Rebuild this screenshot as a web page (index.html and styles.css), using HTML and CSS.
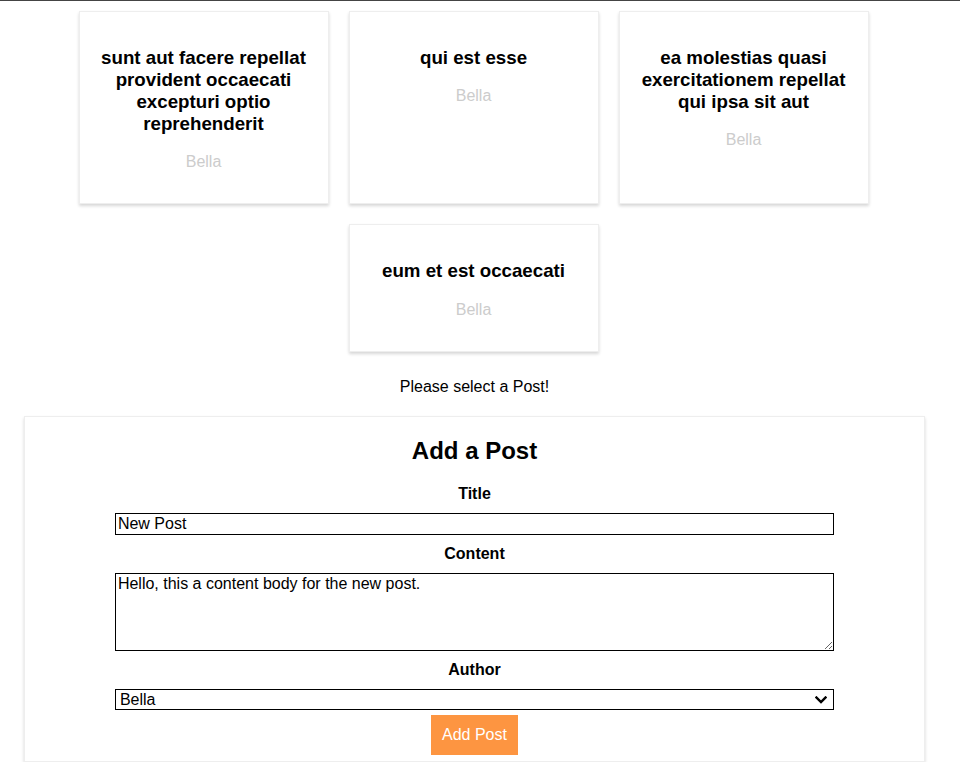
FILE: index.html
```html
<!DOCTYPE html>
<html lang="en">
<head>
<meta charset="utf-8">
<title>Posts</title>
<link rel="stylesheet" href="styles.css">
</head>
<body>
<div class="topbar"></div>
<main class="main">
  <section class="posts">
    <article class="card">
      <h3 class="card-title">sunt aut facere repellat provident occaecati excepturi optio reprehenderit</h3>
      <p class="card-author">Bella</p>
    </article>
    <article class="card">
      <h3 class="card-title">qui est esse</h3>
      <p class="card-author">Bella</p>
    </article>
    <article class="card">
      <h3 class="card-title">ea molestias quasi exercitationem repellat qui ipsa sit aut</h3>
      <p class="card-author">Bella</p>
    </article>
    <article class="card">
      <h3 class="card-title">eum et est occaecati</h3>
      <p class="card-author">Bella</p>
    </article>
  </section>
  <p class="hint">Please select a Post!</p>
  <section class="form-box">
    <h2 class="form-title">Add a Post</h2>
    <form class="form">
      <label class="label" for="title">Title</label>
      <input class="field" id="title" type="text" value="New Post">
      <label class="label" for="content">Content</label>
      <textarea class="field area" id="content">Hello, this a content body for the new post.</textarea>
      <label class="label" for="author">Author</label>
      <div class="select-wrap">
        <select class="field select" id="author">
          <option>Bella</option>
        </select>
        <svg class="chevron" width="12" height="8" viewBox="0 0 12 8" aria-hidden="true">
          <path d="M1.5 1.5 L6 6 L10.5 1.5" fill="none" stroke="#000" stroke-width="2.4" stroke-linecap="square"/>
        </svg>
      </div>
      <button class="btn" type="button">Add Post</button>
    </form>
  </section>
</main>
</body>
</html>
```

FILE: styles.css
```css
html, body {
  margin: 0;
  padding: 0;
  background: #fff;
  font-family: "Liberation Sans", Arial, sans-serif;
  font-size: 16px;
  color: #000;
}

.topbar {
  height: 1px;
  background: #444;
}

.main {
  width: 933px;
  margin: 0 0 0 8px;
}

.posts {
  display: flex;
  flex-wrap: wrap;
  justify-content: center;
  margin-right: 2px;
}

.card {
  width: 250px;
  box-sizing: border-box;
  margin: 10px;
  padding: 16px;
  border: 1px solid #eee;
  box-shadow: 0 2px 3px rgba(0, 0, 0, 0.16);
  text-align: center;
  background: #fff;
}

.card-title {
  font-size: 18.72px;
  font-weight: bold;
  margin: 18.72px 0;
}

.card-author {
  color: #ccc;
  margin: 16px 0;
}

.hint {
  text-align: center;
  margin: 16px 0;
}

.form-box {
  margin: 20px 16px 0;
  border: 1px solid #eee;
  box-shadow: 0 2px 3px rgba(0, 0, 0, 0.16);
  padding: 0 0 6px;
  text-align: center;
}

.form-title {
  font-size: 24px;
  font-weight: bold;
  margin: 19.92px 0;
}

.form {
  display: flex;
  flex-direction: column;
  align-items: center;
}

.label {
  font-weight: bold;
  margin: 0 0 10px;
}

.field {
  display: block;
  width: 80%;
  box-sizing: border-box;
  font-family: "Liberation Sans", Arial, sans-serif;
  font-size: 16px;
  border: 1px solid #000;
  border-radius: 0;
  padding: 1px 2px;
  margin: 0 0 10px;
  background: #fff;
  color: #000;
}

.area {
  height: 78px;
  resize: vertical;
}

.select-wrap {
  position: relative;
  width: 80%;
  margin-bottom: 5px;
}

.select {
  width: 100%;
  height: 21px;
  margin: 0;
  padding: 0 20px 0 4px;
  -webkit-appearance: none;
  appearance: none;
  line-height: 19px;
}

.chevron {
  position: absolute;
  right: 7px;
  top: 7px;
  pointer-events: none;
}

.btn {
  background: #fd9541;
  color: #fff;
  border: none;
  border-radius: 0;
  font-family: "Liberation Sans", Arial, sans-serif;
  font-size: 16px;
  padding: 11px 11px;
  cursor: pointer;
}
```
